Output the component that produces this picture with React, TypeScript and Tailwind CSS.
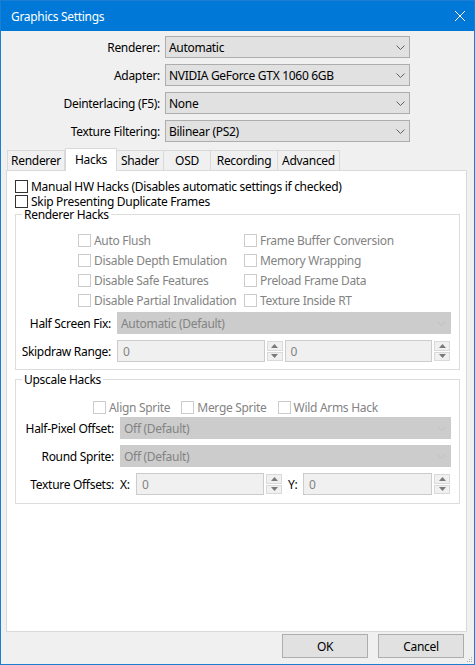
import React from "react";

// Graphics Settings dialog (Windows 10 look)

const Chevron: React.FC<{ color: string }> = ({ color }) => (
  <svg width="9" height="5" viewBox="0 0 9 5" className="shrink-0">
    <path d="M0.5 0.5 L4.5 4.5 L8.5 0.5" fill="none" stroke={color} strokeWidth="1" />
  </svg>
);

const Combo: React.FC<{ value: string; disabled?: boolean; className?: string }> = ({
  value,
  disabled,
  className = "",
}) => (
  <div
    className={`h-[22px] flex items-center pl-[3px] pr-[4px] border ${
      disabled
        ? "bg-[#cccccc] border-[#cccccc] text-[#838383]"
        : "bg-[#e1e1e1] border-[#adadad] text-black"
    } ${className}`}
  >
    <span className="flex-1 truncate">{value}</span>
    <Chevron color={disabled ? "#bfbfbf" : "#606060"} />
  </div>
);

const Check: React.FC<{ label: string; disabled?: boolean }> = ({ label, disabled }) => (
  <div className="flex items-center gap-[3px] whitespace-nowrap">
    <span
      className={`w-[13px] h-[13px] border bg-white shrink-0 ${
        disabled ? "border-[#cccccc]" : "border-[#333333]"
      }`}
    />
    <span className={disabled ? "text-[#838383]" : "text-black"}>{label}</span>
  </div>
);

const Spin: React.FC<{ value: string; className?: string }> = ({ value, className = "" }) => (
  <div className={`flex h-[22px] ${className}`}>
    <div className="flex-1 bg-[#f0f0f0] border border-[#cccccc] flex items-center pl-[5px] text-[#838383]">
      {value}
    </div>
    <div className="ml-[1px] w-[18px] flex flex-col gap-[1px] p-[1px]">
      <div className="flex-1 bg-[#f0f0f0] border border-[#d9d9d9] flex items-center justify-center">
        <svg width="7" height="4" viewBox="0 0 7 4">
          <path d="M0 4 L3.5 0 L7 4 Z" fill="#7a7a7a" />
        </svg>
      </div>
      <div className="flex-1 bg-[#f0f0f0] border border-[#d9d9d9] flex items-center justify-center">
        <svg width="7" height="4" viewBox="0 0 7 4">
          <path d="M0 0 L3.5 4 L7 0 Z" fill="#7a7a7a" />
        </svg>
      </div>
    </div>
  </div>
);

const GroupBox: React.FC<{ title: string; className?: string; children: React.ReactNode }> = ({
  title,
  className = "",
  children,
}) => (
  <fieldset className={`border border-[#dcdcdc] ${className}`}>
    <legend className="relative top-[1px] ml-[6px] px-[2px] leading-[10px]">{title}</legend>
    {children}
  </fieldset>
);

const tabs = [
  { name: "Renderer", w: "w-[58px]" },
  { name: "Hacks", w: "w-[52px]", active: true },
  { name: "Shader", w: "w-[47px]" },
  { name: "OSD", w: "w-[47px]" },
  { name: "Recording", w: "w-[67px]" },
  { name: "Advanced", w: "w-[62px]" },
];

const topRows = [
  { label: "Renderer:", value: "Automatic" },
  { label: "Adapter:", value: "NVIDIA GeForce GTX 1060 6GB" },
  { label: "Deinterlacing (F5):", value: "None" },
  { label: "Texture Filtering:", value: "Bilinear (PS2)" },
];

export default function App() {
  return (
    <div className="w-[475px] h-[665px] flex flex-col border border-[#1a7fd4] bg-[#f0f0f0] text-[12px] leading-[15px] tracking-[-0.3px] font-['Noto_Sans',sans-serif] text-black">
      {/* Title bar */}
      <div className="h-[30px] shrink-0 bg-[#0078d7] flex items-center pl-[10px] pr-[9px] text-white">
        <span className="flex-1">Graphics Settings</span>
        <svg width="10" height="10" viewBox="0 0 10 10">
          <path d="M0 0 L10 10 M10 0 L0 10" stroke="#ffffff" strokeWidth="1" />
        </svg>
      </div>

      {/* Body */}
      <div className="relative flex-1 flex flex-col pt-[5px] pb-[6px]">
        <div className="flex flex-col gap-[6px]">
          {topRows.map((r) => (
            <div key={r.label} className="flex items-center">
              <span className="w-[159px] text-right">{r.label}</span>
              <Combo value={r.value} className="ml-[5px] w-[245px]" />
            </div>
          ))}
        </div>

        {/* Tabs */}
        <div className="mt-[6px] ml-[5px] mr-[7px] flex-1 flex flex-col">
          <div className="h-[22px] flex items-end pl-[1px]">
            {tabs.map((t) =>
              t.active ? (
                <div
                  key={t.name}
                  className={`${t.w} h-[23px] -mb-px relative z-10 bg-white border border-b-0 border-[#d9d9d9] flex items-center justify-center pb-[2px]`}
                >
                  {t.name}
                </div>
              ) : (
                <div
                  key={t.name}
                  className={`${t.w} h-[20px] bg-[#f0f0f0] border-t border-r border-[#d9d9d9] first:border-l flex items-center justify-center`}
                >
                  {t.name}
                </div>
              )
            )}
          </div>

          <div className="flex-1 bg-white border border-[#d9d9d9] pt-[8px] pl-[8px] pr-[6px]">
            <div className="h-[15px] flex items-center">
              <Check label="Manual HW Hacks (Disables automatic settings if checked)" />
            </div>
            <div className="h-[15px] flex items-center">
              <Check label="Skip Presenting Duplicate Frames" />
            </div>

            <GroupBox title="Renderer Hacks" className="pr-[8px] pb-[7px]">
              <div className="grid grid-cols-[166px_1fr] pl-[62px] pt-[11px]">
                {[
                  "Auto Flush",
                  "Frame Buffer Conversion",
                  "Disable Depth Emulation",
                  "Memory Wrapping",
                  "Disable Safe Features",
                  "Preload Frame Data",
                  "Disable Partial Invalidation",
                  "Texture Inside RT",
                ].map((l) => (
                  <div key={l} className="h-[20px] flex items-center">
                    <Check label={l} disabled />
                  </div>
                ))}
              </div>
              <div className="mt-[2px] flex items-center">
                <span className="w-[95px] text-right">Half Screen Fix:</span>
                <Combo value="Automatic (Default)" disabled className="ml-[6px] flex-1" />
              </div>
              <div className="mt-[6px] flex items-center">
                <span className="w-[95px] text-right">Skipdraw Range:</span>
                <div className="ml-[6px] flex-1 flex gap-[1px]">
                  <Spin value="0" className="flex-1" />
                  <Spin value="0" className="flex-1" />
                </div>
              </div>
            </GroupBox>

            <GroupBox title="Upscale Hacks" className="mt-[4px] pr-[8px] pb-[8px]">
              <div className="h-[20px] mt-[13px] flex items-center gap-[11px] pl-[77px]">
                <Check label="Align Sprite" disabled />
                <Check label="Merge Sprite" disabled />
                <Check label="Wild Arms Hack" disabled />
              </div>
              <div className="flex items-center">
                <span className="w-[98px] text-right">Half-Pixel Offset:</span>
                <Combo value="Off (Default)" disabled className="ml-[6px] flex-1" />
              </div>
              <div className="mt-[6px] flex items-center">
                <span className="w-[98px] text-right">Round Sprite:</span>
                <Combo value="Off (Default)" disabled className="ml-[6px] flex-1" />
              </div>
              <div className="mt-[6px] flex items-center">
                <span className="w-[98px] text-right">Texture Offsets:</span>
                <span className="ml-[6px] w-[10px]">X:</span>
                <Spin value="0" className="ml-[6px] w-[147px]" />
                <span className="ml-[5px] w-[10px]">Y:</span>
                <Spin value="0" className="ml-[5px] flex-1" />
              </div>
            </GroupBox>
          </div>
        </div>

        {/* Buttons */}
        <div className="mt-[2px] flex justify-end gap-[10px] pr-[10px]">
          <button className="w-[86px] h-[24px] bg-[#e1e1e1] border border-[#adadad]">OK</button>
          <button className="w-[86px] h-[24px] bg-[#e1e1e1] border border-[#adadad]">Cancel</button>
        </div>

        {/* Size grip */}
        <svg width="6" height="6" viewBox="0 0 6 6" className="absolute right-[1px] bottom-[1px]">
          <rect x="4" y="0" width="1" height="1" fill="#b0b0b0" />
          <rect x="2" y="2" width="1" height="1" fill="#b0b0b0" />
          <rect x="4" y="2" width="1" height="1" fill="#b0b0b0" />
          <rect x="0" y="4" width="1" height="1" fill="#b0b0b0" />
          <rect x="2" y="4" width="1" height="1" fill="#b0b0b0" />
          <rect x="4" y="4" width="1" height="1" fill="#b0b0b0" />
        </svg>
      </div>
    </div>
  );
}
